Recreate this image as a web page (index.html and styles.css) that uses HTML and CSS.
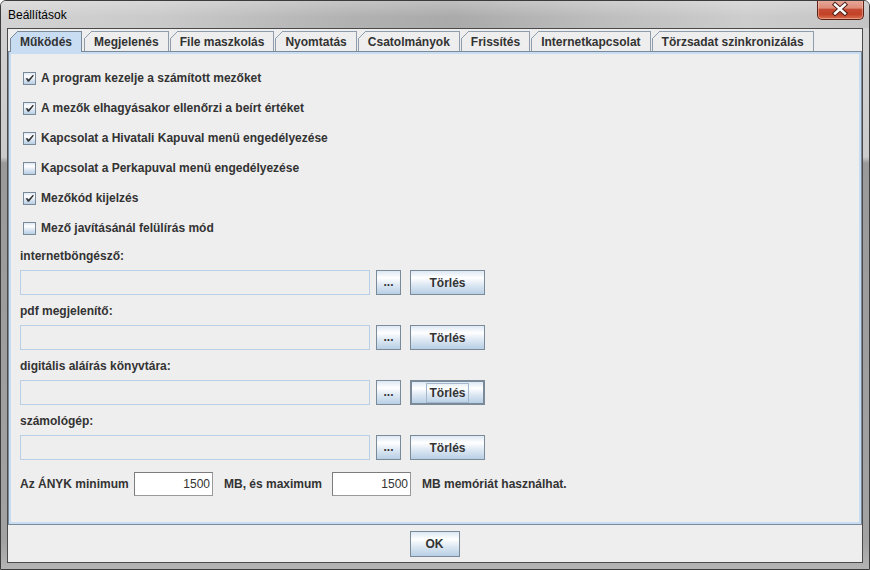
FILE: index.html
```html
<!DOCTYPE html>
<html lang="hu">
<head>
<meta charset="utf-8">
<title>Beállítások</title>
<link rel="stylesheet" href="styles.css">
</head>
<body>
<div class="window">
  <div class="titlebar">
    <span class="title">Beállítások</span>
    <div class="close" aria-label="Bezárás">
      <svg width="47" height="20" viewBox="0 0 47 20">
        <path d="M18.5 5.5 L28.5 14.5 M28.5 5.5 L18.5 14.5" stroke="#4a1d14" stroke-width="4.6" stroke-linecap="square"/>
        <path d="M18.5 5.5 L28.5 14.5 M28.5 5.5 L18.5 14.5" stroke="#ffffff" stroke-width="2.6" stroke-linecap="square"/>
      </svg>
    </div>
  </div>
  <div class="client">
    <div class="tabs">
      <div class="tab active">Működés</div>
      <div class="tab">Megjelenés</div>
      <div class="tab">File maszkolás</div>
      <div class="tab">Nyomtatás</div>
      <div class="tab">Csatolmányok</div>
      <div class="tab">Frissítés</div>
      <div class="tab">Internetkapcsolat</div>
      <div class="tab">Törzsadat szinkronizálás</div>
    </div>
    <div class="panel">
      <div class="checks">
        <div class="check"><span class="box"><svg class="tick" width="11" height="11" viewBox="0 0 11 11"><path d="M1.6 5.2 L3.6 5.2 L4.6 6.6 L8.6 2 L9.6 2 L9.6 3 L5 8.8 L3.8 8.8 Z" fill="#333"/></svg></span>A program kezelje a számított mezőket</div>
        <div class="check"><span class="box"><svg class="tick" width="11" height="11" viewBox="0 0 11 11"><path d="M1.6 5.2 L3.6 5.2 L4.6 6.6 L8.6 2 L9.6 2 L9.6 3 L5 8.8 L3.8 8.8 Z" fill="#333"/></svg></span>A mezők elhagyásakor ellenőrzi a beírt értéket</div>
        <div class="check"><span class="box"><svg class="tick" width="11" height="11" viewBox="0 0 11 11"><path d="M1.6 5.2 L3.6 5.2 L4.6 6.6 L8.6 2 L9.6 2 L9.6 3 L5 8.8 L3.8 8.8 Z" fill="#333"/></svg></span>Kapcsolat a Hivatali Kapuval menü engedélyezése</div>
        <div class="check"><span class="box"></span>Kapcsolat a Perkapuval menü engedélyezése</div>
        <div class="check"><span class="box"><svg class="tick" width="11" height="11" viewBox="0 0 11 11"><path d="M1.6 5.2 L3.6 5.2 L4.6 6.6 L8.6 2 L9.6 2 L9.6 3 L5 8.8 L3.8 8.8 Z" fill="#333"/></svg></span>Mezőkód kijelzés</div>
        <div class="check"><span class="box"></span>Mező javításánál felülírás mód</div>
      </div>

      <div class="group first">
        <div class="group-label">internetböngésző:</div>
        <div class="field-row">
          <div class="field"></div>
          <div class="btn btn-dots">...</div>
          <div class="btn btn-clear">Törlés</div>
        </div>
      </div>
      <div class="group">
        <div class="group-label">pdf megjelenítő:</div>
        <div class="field-row">
          <div class="field"></div>
          <div class="btn btn-dots">...</div>
          <div class="btn btn-clear">Törlés</div>
        </div>
      </div>
      <div class="group">
        <div class="group-label">digitális aláírás könyvtára:</div>
        <div class="field-row">
          <div class="field"></div>
          <div class="btn btn-dots">...</div>
          <div class="btn btn-clear focused"><span class="focus-ring">Törlés</span></div>
        </div>
      </div>
      <div class="group">
        <div class="group-label">számológép:</div>
        <div class="field-row">
          <div class="field"></div>
          <div class="btn btn-dots">...</div>
          <div class="btn btn-clear">Törlés</div>
        </div>
      </div>

      <div class="memory">
        <span class="mem-label mem-min">Az ÁNYK minimum</span>
        <div class="num">1500</div>
        <span class="mem-label mem-max">MB, és maximum</span>
        <div class="num">1500</div>
        <span class="mem-label mem-tail">MB memóriát használhat.</span>
      </div>
    </div>
    <div class="footer">
      <div class="btn btn-ok">OK</div>
    </div>
  </div>
</div>
</body>
</html>
```

FILE: styles.css
```css
* { box-sizing: border-box; }

html, body {
  margin: 0;
  padding: 0;
}

body {
  width: 870px;
  height: 570px;
  overflow: hidden;
  background: #ffffff;
  font-family: "Liberation Sans", Arial, sans-serif;
  color: #333333;
}

.window {
  width: 870px;
  height: 570px;
  border: 1px solid #3c3c3c;
  border-radius: 6px 6px 0 0;
  background: linear-gradient(to bottom, #d2d2d2 0, #cbcbcb 156px, #9a9a9a 162px, #a2a2a2 540px, #b4b4b4 100%);
  display: flex;
  flex-direction: column;
  overflow: hidden;
}

/* ---------- title bar ---------- */
.titlebar {
  height: 27px;
  flex: none;
  display: flex;
  justify-content: space-between;
  align-items: flex-start;
  padding-left: 7px;
  background:
    linear-gradient(to bottom, rgba(255,255,255,0.25), rgba(255,255,255,0) 60%),
    linear-gradient(to right, #d3d3d3 0%, #cacaca 18%, #b2b2b2 40%, #aaaaaa 52%, #bcbcbc 68%, #cdcdcd 86%, #c4c4c4 100%);
}

.title {
  font-family: "Liberation Sans", Arial, sans-serif;
  font-size: 12px;
  line-height: 15px;
  margin-top: 7px;
  color: #000000;
}

.close {
  width: 47px;
  height: 20px;
  margin-top: -1px;
  margin-right: 5px;
  border: 1px solid #5e2117;
  border-top: none;
  border-radius: 0 0 5px 5px;
  background: linear-gradient(to bottom, #e8aa9b 0%, #dd8c78 42%, #c64a32 50%, #c24128 75%, #d8704e 100%);
  box-shadow: inset 0 0 0 1px rgba(255, 210, 190, 0.45);
  display: flex;
}

.close svg { display: block; margin: -1px 0 0 -1px; }

/* ---------- client area ---------- */
.client {
  flex: 1;
  margin: 0 6px 6px;
  border: 1px solid #4a4a4a;
  background: #eeeeee;
  display: flex;
  flex-direction: column;
}

.tabs {
  height: 22px;
  flex: none;
  display: flex;
  align-items: flex-end;
  padding: 0 0 0 2px;
}

.tab {
  position: relative;
  height: 20px;
  padding: 0 9px;
  margin-right: 1px;
  border: 1px solid #8e9cab;
  border-bottom: none;
  background: #eeeeee;
  font-size: 12px;
  font-weight: bold;
  line-height: 20px;
  color: #333333;
  white-space: nowrap;
}

.tab::before {
  content: "";
  position: absolute;
  top: -1px;
  left: -1px;
  width: 8px;
  height: 8px;
  background: linear-gradient(135deg, #eeeeee 0 45%, #8e9cab 45% 56%, transparent 56%);
}

.tab.active {
  z-index: 1;
  height: 21px;
  margin-bottom: -1px;
  margin-right: 2px;
  border-color: #7a8a99;
  background: #c8ddf2;
  line-height: 20px;
}

.tab.active::before {
  background: linear-gradient(135deg, #eeeeee 0 45%, #7a8a99 45% 56%, transparent 56%);
}

.panel {
  flex: none;
  height: 474px;
  border: 1px solid #7a8a99;
  box-shadow: inset 0 0 0 2px #c8ddf2;
  padding: 11px 0 0 11px;
  display: flex;
  flex-direction: column;
  font-size: 12px;
  font-weight: bold;
}

/* ---------- checkboxes ---------- */
.checks {
  display: flex;
  flex-direction: column;
}

.check {
  height: 30px;
  display: flex;
  align-items: center;
  gap: 5px;
  padding-left: 3px;
  white-space: nowrap;
}

.box {
  width: 13px;
  height: 13px;
  flex: none;
  border: 1px solid #7a8a99;
  background: linear-gradient(to bottom, #dde8f3 0%, #ffffff 30%, #dde8f3 60%, #b8cfe5 100%);
  display: flex;
  align-items: center;
  justify-content: center;
}

.tick { display: block; }

/* ---------- path rows ---------- */
.group.first { margin-top: -3px; }

.group-label {
  height: 30px;
  padding-top: 2px;
  display: flex;
  align-items: center;
}

.field-row {
  height: 25px;
  display: flex;
  align-items: stretch;
}

.field {
  width: 350px;
  border: 1px solid #b8cfe5;
  background: #eeeeee;
}

.btn {
  border: 1px solid #7a8a99;
  background: linear-gradient(to bottom, #dde8f3 0%, #ffffff 30%, #dde8f3 60%, #b8cfe5 100%);
  display: flex;
  align-items: center;
  justify-content: center;
  font-size: 12px;
  font-weight: bold;
  color: #333333;
}

.btn-dots {
  width: 25px;
  margin-left: 6px;
  padding-bottom: 1px;
}

.btn-clear {
  width: 75px;
  margin-left: 9px;
}

.btn-clear.focused {
  border: 2px solid #7a8a99;
}

.focus-ring {
  border: 1px solid #a3b8cc;
  padding: 2px 2px 2px;
  line-height: 14px;
}

/* ---------- memory row ---------- */
.memory {
  margin-top: 12px;
  height: 24px;
  display: flex;
  align-items: center;
  white-space: nowrap;
}

.mem-min { width: 114px; }
.mem-max { width: 119px; padding-left: 11px; }
.mem-tail { padding-left: 11px; }

.num {
  width: 79px;
  height: 24px;
  border: 1px solid #7d7d7d;
  border-right-color: #9a9a9a;
  border-bottom-color: #9a9a9a;
  background: #ffffff;
  font-weight: normal;
  text-align: right;
  padding-right: 2px;
  line-height: 22px;
  color: #333333;
}

/* ---------- footer ---------- */
.footer {
  flex: 1;
  display: flex;
  align-items: center;
  justify-content: center;
}

.btn-ok {
  width: 50px;
  height: 26px;
  margin-right: 1px;
}
```
